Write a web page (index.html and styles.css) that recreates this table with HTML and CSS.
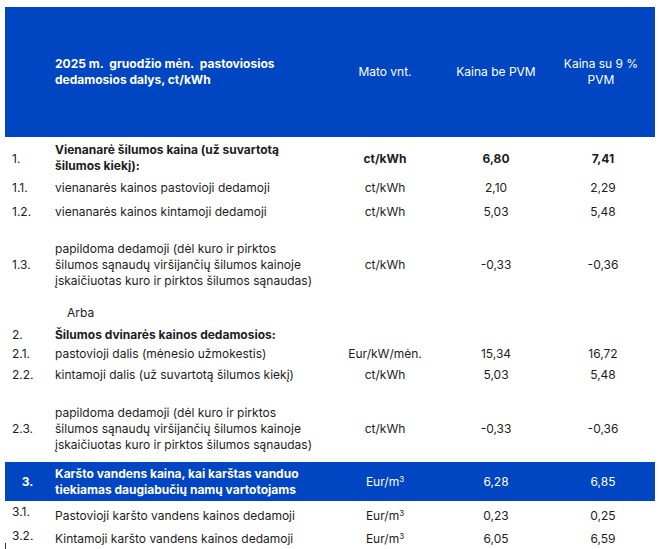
FILE: index.html
```html
<!DOCTYPE html>
<html lang="lt">
<head>
<meta charset="utf-8">
<title>Šilumos kainos</title>
<link rel="stylesheet" href="styles.css">
</head>
<body>
<div class="page">
<table class="prices">
  <colgroup>
    <col class="c-num"><col class="c-desc"><col class="c-unit"><col class="c-net"><col class="c-vat">
  </colgroup>
  <thead>
    <tr class="head">
      <th></th>
      <th class="desc">2025 m.&nbsp; gruodžio mėn.&nbsp; pastoviosios dedamosios dalys, ct/kWh</th>
      <th class="val">Mato vnt.</th>
      <th class="val">Kaina be PVM</th>
      <th class="val">Kaina su 9 % PVM</th>
    </tr>
  </thead>
  <tbody>
    <tr class="r1 bold">
      <td class="num plain">1.</td>
      <td class="desc">Vienanarė šilumos kaina (už suvartotą šilumos kiekį):</td>
      <td class="val">ct/kWh</td><td class="val">6,80</td><td class="val">7,41</td>
    </tr>
    <tr class="r11">
      <td class="num">1.1.</td>
      <td class="desc">vienanarės kainos pastovioji dedamoji</td>
      <td class="val">ct/kWh</td><td class="val">2,10</td><td class="val">2,29</td>
    </tr>
    <tr class="r12">
      <td class="num">1.2.</td>
      <td class="desc">vienanarės kainos kintamoji dedamoji</td>
      <td class="val">ct/kWh</td><td class="val">5,03</td><td class="val">5,48</td>
    </tr>
    <tr class="r13">
      <td class="num">1.3.</td>
      <td class="desc">papildoma dedamoji (dėl kuro ir pirktos šilumos sąnaudų viršijančių šilumos kainoje įskaičiuotas kuro ir pirktos šilumos sąnaudas)</td>
      <td class="val">ct/kWh</td><td class="val">-0,33</td><td class="val">-0,36</td>
    </tr>
    <tr class="arba">
      <td></td>
      <td class="desc"><span class="or">Arba</span></td>
      <td></td><td></td><td></td>
    </tr>
    <tr class="r2">
      <td class="num">2.</td>
      <td class="desc"><b>Šilumos dvinarės kainos dedamosios:</b></td>
      <td></td><td></td><td></td>
    </tr>
    <tr class="r21">
      <td class="num">2.1.</td>
      <td class="desc">pastovioji dalis (mėnesio užmokestis)</td>
      <td class="val">Eur/kW/mėn.</td><td class="val">15,34</td><td class="val">16,72</td>
    </tr>
    <tr class="r22">
      <td class="num">2.2.</td>
      <td class="desc">kintamoji dalis (už suvartotą šilumos kiekį)</td>
      <td class="val">ct/kWh</td><td class="val">5,03</td><td class="val">5,48</td>
    </tr>
    <tr class="r23">
      <td class="num">2.3.</td>
      <td class="desc">papildoma dedamoji (dėl kuro ir pirktos šilumos sąnaudų viršijančių šilumos kainoje įskaičiuotas kuro ir pirktos šilumos sąnaudas)</td>
      <td class="val">ct/kWh</td><td class="val">-0,33</td><td class="val">-0,36</td>
    </tr>
    <tr class="r3">
      <td class="num center">3.</td>
      <td class="desc">Karšto vandens kaina, kai karštas vanduo tiekiamas daugiabučių namų vartotojams</td>
      <td class="val">Eur/m<span class="cube">3</span></td><td class="val">6,28</td><td class="val">6,85</td>
    </tr>
    <tr class="r31">
      <td class="num up">3.1.</td>
      <td class="desc">Pastovioji karšto vandens kainos dedamoji</td>
      <td class="val">Eur/m<span class="cube">3</span></td><td class="val">0,23</td><td class="val">0,25</td>
    </tr>
    <tr class="r32">
      <td class="num up">3.2.</td>
      <td class="desc">Kintamoji karšto vandens kainos dedamoji</td>
      <td class="val">Eur/m<span class="cube">3</span></td><td class="val">6,05</td><td class="val">6,59</td>
    </tr>
  </tbody>
</table>
<div class="tick"></div>
</div>
</body>
</html>
```

FILE: styles.css
```css
html, body {
  margin: 0;
  padding: 0;
  background: #ffffff;
}
body {
  font-family: Inter, "Noto Sans", "Liberation Sans", sans-serif;
  font-size: 12px;
  color: #1c1c1c;
}
.page {
  padding: 7px 4px 0 5px;
  position: relative;
  height: 542px;
  overflow: hidden;
}
.prices {
  width: 650px;
  border-collapse: collapse;
  table-layout: fixed;
}
.c-num { width: 45px; }
.c-desc { width: 279px; }
.c-unit { width: 112px; }
.c-net { width: 110px; }
.c-vat { width: 104px; }

.prices th, .prices td {
  padding: 0;
  vertical-align: middle;
  line-height: 16px;
  font-weight: 400;
}
.prices .desc {
  text-align: left;
  padding-left: 5px;
}
.prices .val {
  text-align: center;
}
.prices .num {
  padding-left: 7px;
  text-align: left;
}
.cube {
  font-size: 8px;
  vertical-align: 4px;
  line-height: 0;
}
.head {
  background: #0045c1;
  color: #ffffff;
  height: 130px;
}
.head .desc { font-weight: 700; padding-right: 40px; }
.head .val { padding: 0 12px; }
.head .val:last-child { padding-right: 16px; }

.bold td { font-weight: 700; }
.bold td.plain { font-weight: 400; }
.r1 td { padding-top: 3px; }
.r1 td.desc { padding-right: 50px; padding-top: 1px; }

.r1 { height: 40px; }
.r11 { height: 22px; }
.r12 { height: 26px; }
.r13 { height: 80px; }
.r13 .desc, .r23 .desc { padding-right: 12px; }
.arba { height: 16px; }
.or { padding-left: 12px; }
.r2 { height: 23px; }
.r2 td { padding-top: 4px; }
.r21 { height: 20px; }
.r22 { height: 22px; }
.r23 { height: 76px; }
.r23 td { padding-top: 10px; }
.r3 {
  background: #0045c1;
  color: #ffffff;
  height: 39px;
}
.r3 td { font-weight: 700; }
.r3 td.val { font-weight: 400; }
.r3 .num.center { text-align: center; padding-left: 0; }
.r31 { height: 24px; }
.r32 { height: 22px; }
.r31 td, .r32 td { padding-top: 5px; }
.prices td.up { vertical-align: top; padding-top: 3px; }

.tick {
  position: absolute;
  left: 5px;
  top: 543px;
  width: 1px;
  height: 6px;
  background: #333;
}
```
